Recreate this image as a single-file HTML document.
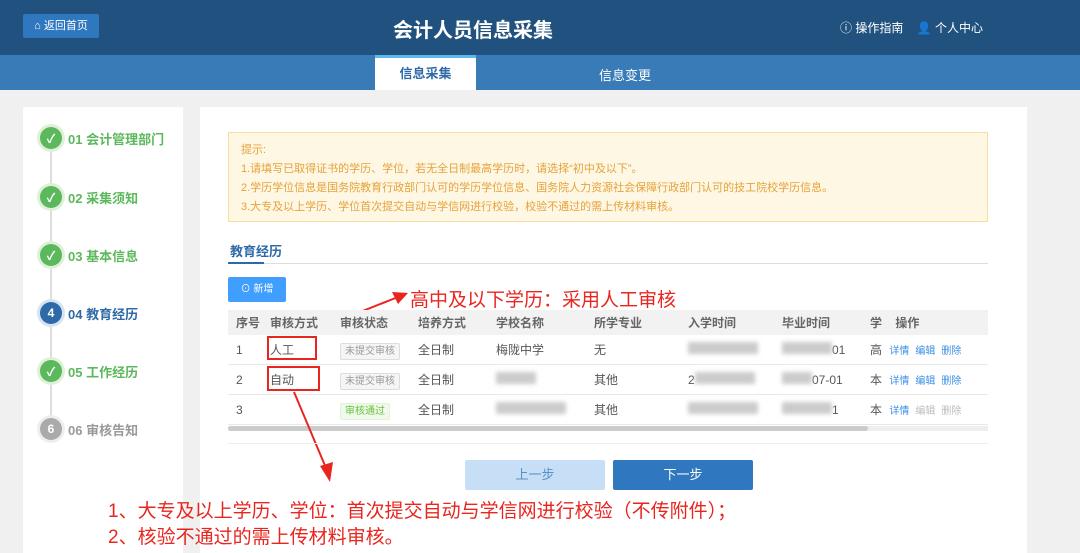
<!DOCTYPE html><html><head><meta charset="utf-8"><style>
body{margin:0;width:1080px;height:553px;overflow:hidden;background:#f0f0f0;font-family:"Liberation Sans","Noto Sans CJK SC",sans-serif;position:relative}
.a{position:absolute}
.hdr{left:0;top:0;width:1080px;height:55px;background:#21527f}
.nav{left:0;top:55px;width:1080px;height:35px;background:#387bb7}
.step{position:absolute;left:40px;font-size:13px;font-weight:bold;color:#5cb85c;display:flex;align-items:center}
.c{width:22px;height:22px;border-radius:50%;background:#5cb85c;color:#fff;display:flex;align-items:center;justify-content:center;margin-right:6px;font-size:12px;box-shadow:0 0 0 3px #dff0d8}
td{font-size:12px;color:#555;height:29px;border-bottom:1px solid #e8e8e8;padding:0 0 0 8px}
th{font-size:12px;color:#666;background:#f2f2f2;height:25px;text-align:left;padding:0 0 0 8px;font-weight:bold}
table{border-collapse:collapse;table-layout:fixed}
.tag{font-size:10px;border:1px solid #ddd;background:#f5f5f5;color:#999;padding:2px 4px;border-radius:2px}
.blur{display:inline-block;height:12px;background:#ccc;filter:blur(2px)}
.red{color:#e8261f;font-size:19px}
.op{color:#3a8ee6;font-size:10px;margin-right:6px}
</style></head><body>
<div class="a hdr"></div>
<div class="a" style="left:23px;top:14px;width:76px;height:24px;background:#2f77bf;border-radius:2px;color:#fff;font-size:11px;line-height:24px;text-align:center">⌂ 返回首页</div>
<div class="a" style="left:393px;top:14px;color:#fff;font-size:20px;font-weight:bold">会计人员信息采集</div>
<div class="a" style="left:840px;top:19px;color:#fff;font-size:12px">ⓘ 操作指南 &nbsp;&nbsp; 👤 个人中心</div>
<div class="a nav"></div>
<div class="a" style="left:375px;top:55px;width:101px;height:35px;background:#fff;border-top:3px solid #5bb9f0;box-sizing:border-box;text-align:center;line-height:32px;font-size:13px;color:#2f6aa8;font-weight:bold">信息采集</div>
<div class="a" style="left:599px;top:65px;color:#fff;font-size:13px">信息变更</div>
<div class="a" style="left:23px;top:107px;width:160px;height:446px;background:#fff"></div>
<div class="a" style="left:200px;top:107px;width:827px;height:446px;background:#fff"></div>
<div class="a" style="left:50px;top:150px;width:2px;height:280px;background:#ddd"></div>
<div class="step" style="top:127px"><span class="c">✓</span>01 会计管理部门</div>
<div class="step" style="top:186px"><span class="c">✓</span>02 采集须知</div>
<div class="step" style="top:244px"><span class="c">✓</span>03 基本信息</div>
<div class="step" style="top:302px;color:#2f6aa8"><span class="c" style="background:#2f6aa8;box-shadow:0 0 0 3px #d5e3f2">4</span>04 教育经历</div>
<div class="step" style="top:360px"><span class="c">✓</span>05 工作经历</div>
<div class="step" style="top:418px;color:#999"><span class="c" style="background:#aaa;box-shadow:0 0 0 3px #eee">6</span>06 审核告知</div>
<div class="a" style="left:228px;top:132px;width:760px;height:90px;background:#fdf7e3;border:1px solid #f6dfa0;box-sizing:border-box;color:#e6a23c;font-size:11px;line-height:19px;padding:8px 12px">提示:<br>1.请填写已取得证书的学历、学位，若无全日制最高学历时，请选择“初中及以下”。<br>2.学历学位信息是国务院教育行政部门认可的学历学位信息、国务院人力资源社会保障行政部门认可的技工院校学历信息。<br>3.大专及以上学历、学位首次提交自动与学信网进行校验，校验不通过的需上传材料审核。</div>
<div class="a" style="left:230px;top:241px;font-size:13px;font-weight:bold;color:#2f6aa8">教育经历</div>
<div class="a" style="left:228px;top:263px;width:760px;height:1px;background:#ddd"></div>
<div class="a" style="left:228px;top:262px;width:36px;height:2px;background:#2f6aa8"></div>
<div class="a" style="left:228px;top:277px;width:58px;height:25px;background:#409eff;border-radius:2px;color:#fff;font-size:10px;line-height:25px;text-align:center">⊙ 新增</div>
<div class="red a" style="left:410px;top:285px">高中及以下学历：采用人工审核</div>
<svg class="a" style="left:320px;top:290px" width="90" height="40"><line x1="5" y1="36" x2="78" y2="7" stroke="#e8261f" stroke-width="2"/><polygon points="88,3 72,2 78,14" fill="#e8261f"/></svg>
<table class="a" style="left:228px;top:310px;width:760px">
<tr><th style="width:26px">序号</th><th style="width:62px">审核方式</th><th style="width:70px">审核状态</th><th style="width:70px">培养方式</th><th style="width:90px">学校名称</th><th style="width:86px">所学专业</th><th style="width:86px">入学时间</th><th style="width:80px">毕业时间</th><th>学 &nbsp;&nbsp; 操作</th></tr>
<tr><td>1</td><td>人工</td><td><span class="tag">未提交审核</span></td><td>全日制</td><td>梅陇中学</td><td>无</td><td><span class="blur" style="width:70px"></span></td><td><span class="blur" style="width:50px"></span>01</td><td>高 <span class="op" style="margin-left:4px">详情</span><span class="op">编辑</span><span class="op">删除</span></td></tr>
<tr><td>2</td><td>自动</td><td><span class="tag">未提交审核</span></td><td>全日制</td><td><span class="blur" style="width:40px"></span></td><td>其他</td><td>2<span class="blur" style="width:60px"></span></td><td><span class="blur" style="width:30px"></span>07-01</td><td>本 <span class="op" style="margin-left:4px">详情</span><span class="op">编辑</span><span class="op">删除</span></td></tr>
<tr><td>3</td><td></td><td><span class="tag" style="background:#f0f9eb;color:#67c23a;border-color:#e1f3d8">审核通过</span></td><td>全日制</td><td><span class="blur" style="width:70px"></span></td><td>其他</td><td><span class="blur" style="width:70px"></span></td><td><span class="blur" style="width:50px"></span>1</td><td>本 <span class="op" style="margin-left:4px">详情</span><span class="op" style="color:#bbb">编辑</span><span class="op" style="color:#bbb">删除</span></td></tr>
</table>
<div class="a" style="left:228px;top:426px;width:760px;height:5px;background:#eee"></div>
<div class="a" style="left:228px;top:426px;width:640px;height:5px;background:#ccc;border-radius:3px"></div>
<div class="a" style="left:267px;top:336px;width:50px;height:24px;border:2px solid #e8261f;box-sizing:border-box"></div>
<div class="a" style="left:267px;top:366px;width:53px;height:25px;border:2px solid #e8261f;box-sizing:border-box"></div>
<svg class="a" style="left:290px;top:390px" width="50" height="95"><line x1="4" y1="2" x2="36" y2="78" stroke="#e8261f" stroke-width="2"/><polygon points="40,92 30,76 43,72" fill="#e8261f"/></svg>
<div class="a" style="left:228px;top:443px;width:760px;height:1px;background:#eee"></div>
<div class="a" style="left:465px;top:460px;width:140px;height:30px;background:#c6dff6;border-radius:2px;color:#5a8fc7;font-size:13px;line-height:30px;text-align:center">上一步</div>
<div class="a" style="left:613px;top:460px;width:140px;height:30px;background:#2f77bf;border-radius:2px;color:#fff;font-size:13px;line-height:30px;text-align:center">下一步</div>
<div class="red a" style="left:108px;top:496px">1、大专及以上学历、学位：首次提交自动与学信网进行校验（不传附件）；</div>
<div class="red a" style="left:108px;top:522px">2、核验不通过的需上传材料审核。</div>
</body></html>
